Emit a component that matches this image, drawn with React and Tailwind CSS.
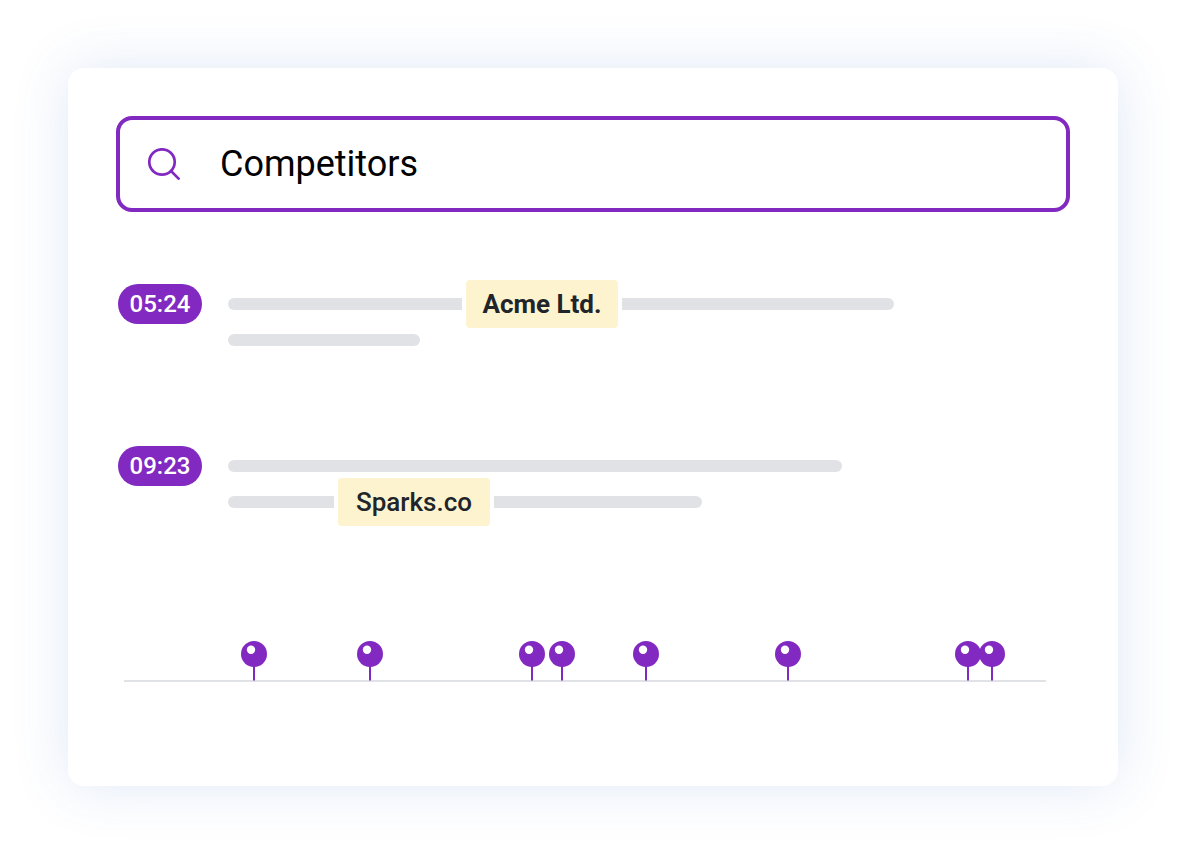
const TEXT_WIDTH = 842;
const AXIS_WIDTH = 922;

const moments = [
  {
    time: "05:24",
    lines: [
      [{ bar: 234, end: "left" }, { tag: "Acme Ltd.", weight: "bold" }, { bar: 272, end: "right" }],
      [{ bar: 192, end: "both" }],
    ],
  },
  {
    time: "09:23",
    lines: [
      [{ bar: 614, end: "both" }],
      [{ bar: 106, end: "left" }, { tag: "Sparks.co", weight: "medium" }, { bar: 208, end: "right" }],
    ],
  },
];

const mentions = [130, 246, 408, 438, 522, 664, 844, 868];

const barEnds = {
  left: "rounded-l-full",
  right: "rounded-r-full",
  both: "rounded-full",
};

const tagWeights = {
  bold: "font-bold",
  medium: "font-medium",
};

export default function App() {
  return (
    <div className="min-h-screen bg-white p-[68px] font-['Roboto','Liberation_Sans',sans-serif]">
      <main className="rounded-2xl bg-white px-12 pt-12 pb-[104px] shadow-[0_0_56px_rgba(60,115,200,0.16)]">
        <SearchBox />

        {/* Transcript matches */}
        <ul className="mt-[72px] flex flex-col gap-[88px] pl-0.5">
          {moments.map((moment) => (
            <Moment key={moment.time} {...moment} />
          ))}
        </ul>

        <Timeline />
      </main>
    </div>
  );
}

function SearchBox() {
  return (
    <div className="flex h-24 items-center gap-10 rounded-2xl border-4 border-[#8129c0] px-7">
      <label htmlFor="search" aria-label="Search" className="shrink-0">
        <svg width="32" height="32" viewBox="0 0 32 32" fill="none" stroke="#8129c0" strokeWidth="2.7">
          <circle cx="14" cy="14" r="12.7" />
          <path d="M23 23l7.6 7.6" strokeLinecap="round" />
        </svg>
      </label>
      <input
        id="search"
        type="text"
        defaultValue="Competitors"
        className="w-full min-w-0 bg-transparent text-4xl text-black outline-none"
      />
    </div>
  );
}

function Moment({ time, lines }) {
  return (
    <li className="flex items-start gap-[26px]">
      <button className="h-10 w-[84px] shrink-0 rounded-full bg-[#8129c0] text-2xl font-medium text-white">
        {time}
      </button>
      <div className="min-w-0 flex-1 pt-0.5">
        {lines.map((parts, i) => (
          <div key={i} className="flex h-9 items-center gap-1">
            {parts.map((part, j) =>
              part.tag ? (
                <mark
                  key={j}
                  className={`flex h-12 w-[152px] shrink-0 items-center justify-center rounded bg-[#fdf4cf] text-[26px] text-[#212529] ${tagWeights[part.weight]}`}
                >
                  {part.tag}
                </mark>
              ) : (
                <span
                  key={j}
                  className={`h-3 bg-[#e1e2e6] ${barEnds[part.end]}`}
                  style={{ width: `${(part.bar / TEXT_WIDTH) * 100}%` }}
                />
              )
            )}
          </div>
        ))}
      </div>
    </li>
  );
}

function Timeline() {
  return (
    <div className="relative mt-[121px] mr-6 ml-2 h-[41px] border-b-2 border-[#e1e2e6]">
      {mentions.map((x) => (
        <svg
          key={x}
          width="26"
          height="40"
          viewBox="0 0 26 40"
          className="absolute top-0 -translate-x-1/2"
          style={{ left: `${(x / AXIS_WIDTH) * 100}%` }}
        >
          <path d="M13 24v15.5" stroke="#8129c0" strokeWidth="2" />
          <circle cx="13" cy="13" r="13" fill="#8129c0" />
          <circle cx="10" cy="8.7" r="4.2" fill="#fff" />
        </svg>
      ))}
    </div>
  );
}
